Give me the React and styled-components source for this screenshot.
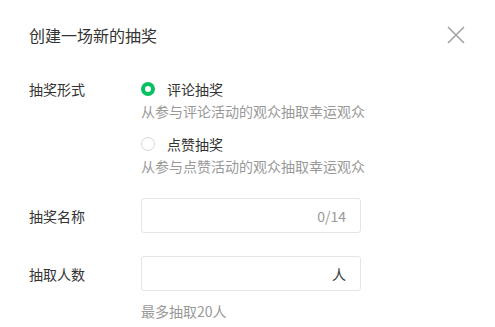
import React, { useState } from "react"
import styled, { createGlobalStyle } from "styled-components"

const GlobalStyle = createGlobalStyle`
  html, body {
    margin: 0;
    padding: 0;
    background: #fff;
  }
  body {
    font-family: "Noto Sans CJK SC", "Noto Sans", sans-serif;
    color: #333;
  }
`

const App = () => {
  const [mode, setMode] = useState("comment")
  const [name, setName] = useState("")
  const [count, setCount] = useState("")

  return (
    <>
      <GlobalStyle />
      <Dialog>
        <Header>
          <Title>创建一场新的抽奖</Title>
          <CloseButton aria-label="关闭">
            <svg width="18" height="18" viewBox="0 0 18 18">
              <path d="M1 1L17 17M17 1L1 17" stroke="#a3a3a3" strokeWidth="1.6" fill="none" />
            </svg>
          </CloseButton>
        </Header>

        <FormRow>
          <Label>抽奖形式</Label>
          <Options>
            <Option onClick={() => setMode("comment")}>
              <Radio checked={mode === "comment"} />
              <OptionText>评论抽奖</OptionText>
            </Option>
            <Desc>从参与评论活动的观众抽取幸运观众</Desc>
            <Option $spaced onClick={() => setMode("like")}>
              <Radio checked={mode === "like"} />
              <OptionText>点赞抽奖</OptionText>
            </Option>
            <Desc>从参与点赞活动的观众抽取幸运观众</Desc>
          </Options>
        </FormRow>

        <FormRow $center $top={22}>
          <Label>抽奖名称</Label>
          <InputBox>
            <Field value={name} maxLength={14} onChange={(e) => setName(e.target.value)} />
            <Suffix $muted>{name.length}/14</Suffix>
          </InputBox>
        </FormRow>

        <FormRow $center $top={23}>
          <Label>抽取人数</Label>
          <InputBox>
            <Field value={count} onChange={(e) => setCount(e.target.value)} />
            <Suffix>人</Suffix>
          </InputBox>
        </FormRow>

        <Hint>最多抽取20人</Hint>
      </Dialog>
    </>
  )
}

export default App

const Dialog = styled.div`
  width: 495px;
  padding: 25px 30px 0 29px;
  box-sizing: border-box;
`
const Header = styled.div`
  display: flex;
  justify-content: space-between;
  align-items: center;
  height: 20px;
`
const Title = styled.h1`
  margin: 0;
  font-size: 16px;
  line-height: 20px;
  font-weight: 400;
  color: #333;
`
const CloseButton = styled.button`
  border: 0;
  padding: 0;
  background: none;
  width: 18px;
  height: 18px;
  cursor: pointer;
  display: flex;
`
const FormRow = styled.div`
  display: grid;
  grid-template-columns: 112px 220px;
  align-items: ${(p) => (p.$center ? "center" : "start")};
  margin-top: ${(p) => (p.$top != null ? p.$top : 34)}px;
`
const Label = styled.div`
  font-size: 14px;
  line-height: 20px;
  color: #333;
`
const Options = styled.div`
  display: flex;
  flex-direction: column;
  white-space: nowrap;
`
const Option = styled.label`
  display: flex;
  align-items: center;
  gap: 12px;
  height: 20px;
  margin-top: ${(p) => (p.$spaced ? 13 : 0)}px;
  cursor: pointer;
`
const Radio = styled.span`
  width: 14px;
  height: 14px;
  box-sizing: border-box;
  border-radius: 50%;
  border: ${(p) => (p.checked ? "4px solid #07c160" : "1px solid #d5d5d5")};
  background: #fff;
`
const OptionText = styled.span`
  font-size: 14px;
  line-height: 20px;
  color: #333;
`
const Desc = styled.div`
  margin-top: 2px;
  font-size: 14px;
  line-height: 20px;
  color: #999;
`
const InputBox = styled.div`
  display: flex;
  align-items: center;
  height: 35px;
  box-sizing: border-box;
  border: 1px solid #e5e5e5;
  border-radius: 3px;
  padding: 0 14px 0 12px;
`
const Field = styled.input`
  flex: 1;
  min-width: 0;
  border: 0;
  outline: none;
  background: transparent;
  font: inherit;
  font-size: 14px;
  color: #333;
`
const Suffix = styled.span`
  font-size: 14px;
  color: ${(p) => (p.$muted ? "#999" : "#333")};
`
const Hint = styled.div`
  margin: 10px 0 0 112px;
  font-size: 14px;
  line-height: 20px;
  color: #999;
`
